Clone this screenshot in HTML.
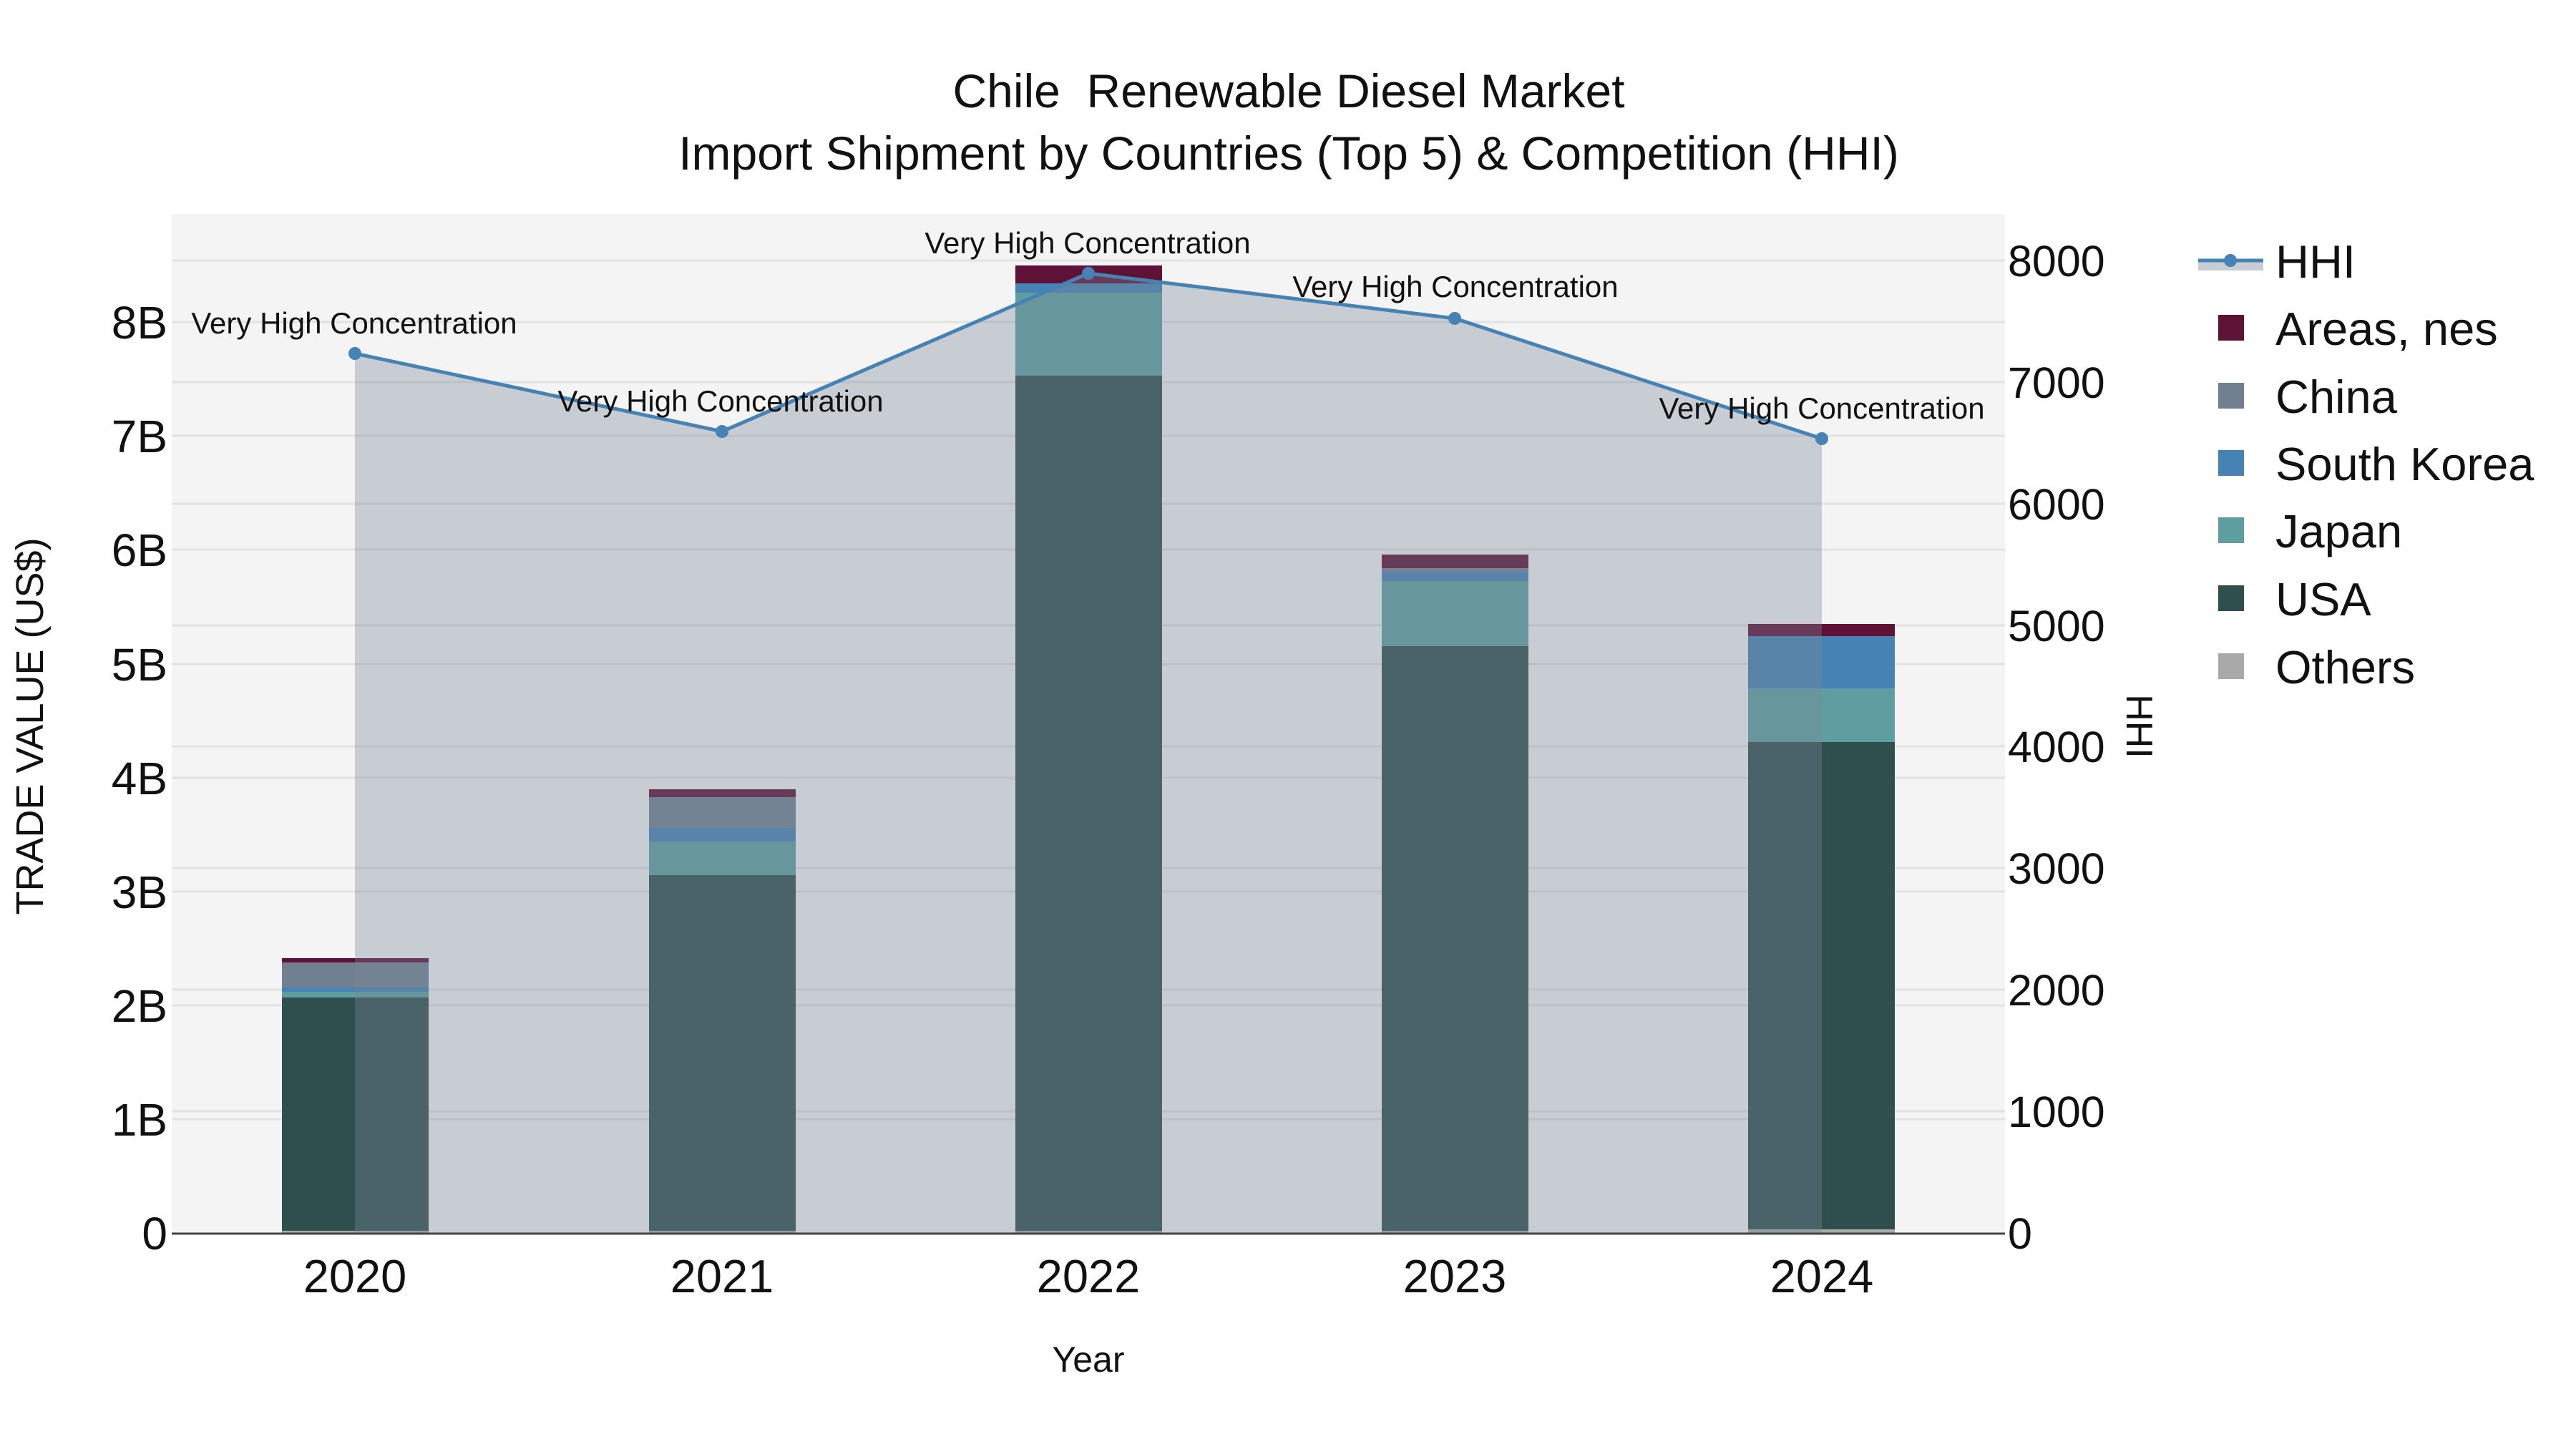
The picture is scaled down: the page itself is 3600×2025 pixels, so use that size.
<!DOCTYPE html>
<html><head><meta charset="utf-8"><style>html,body{margin:0;padding:0;background:#fff}svg{display:block}text{font-family:"Liberation Sans",sans-serif;fill:#111}</style></head>
<body>
<svg width="3600" height="2025" viewBox="0 0 3600 2025" xmlns="http://www.w3.org/2000/svg">
<rect width="3600" height="2025" fill="#fff"/>
<rect x="240" y="299" width="2562" height="1424" fill="#f4f4f4"/>
<g stroke="#e2e2e2" stroke-width="3">
<line x1="240" x2="2802" y1="1564" y2="1564"/><line x1="240" x2="2802" y1="1405" y2="1405"/><line x1="240" x2="2802" y1="1246" y2="1246"/><line x1="240" x2="2802" y1="1087" y2="1087"/><line x1="240" x2="2802" y1="928" y2="928"/><line x1="240" x2="2802" y1="768" y2="768"/><line x1="240" x2="2802" y1="609" y2="609"/><line x1="240" x2="2802" y1="450" y2="450"/>
<line x1="240" x2="2802" y1="1553" y2="1553"/><line x1="240" x2="2802" y1="1383" y2="1383"/><line x1="240" x2="2802" y1="1213" y2="1213"/><line x1="240" x2="2802" y1="1043" y2="1043"/><line x1="240" x2="2802" y1="874" y2="874"/><line x1="240" x2="2802" y1="704" y2="704"/><line x1="240" x2="2802" y1="534" y2="534"/><line x1="240" x2="2802" y1="364" y2="364"/>
</g>
<g>
<rect x="394" y="1339" width="205" height="6" fill="#5e1235"/>
<rect x="394" y="1345" width="205" height="35" fill="#708090"/>
<rect x="394" y="1380" width="205" height="6" fill="#4682b4"/>
<rect x="394" y="1386" width="205" height="8" fill="#5f9ea0"/>
<rect x="394" y="1394" width="205" height="326" fill="#2f4f4f"/>
<rect x="394" y="1720" width="205" height="3" fill="#a9a9a9"/>
<rect x="907" y="1103" width="205" height="11" fill="#5e1235"/>
<rect x="907" y="1114" width="205" height="43" fill="#708090"/>
<rect x="907" y="1157" width="205" height="19" fill="#4682b4"/>
<rect x="907" y="1176" width="205" height="47" fill="#5f9ea0"/>
<rect x="907" y="1223" width="205" height="497" fill="#2f4f4f"/>
<rect x="907" y="1720" width="205" height="3" fill="#a9a9a9"/>
<rect x="1419" y="371" width="205" height="25" fill="#5e1235"/>
<rect x="1419" y="396" width="205" height="13" fill="#4682b4"/>
<rect x="1419" y="409" width="205" height="116" fill="#5f9ea0"/>
<rect x="1419" y="525" width="205" height="1195" fill="#2f4f4f"/>
<rect x="1419" y="1720" width="205" height="3" fill="#a9a9a9"/>
<rect x="1931" y="775" width="205" height="19" fill="#5e1235"/>
<rect x="1931" y="794" width="205" height="6" fill="#708090"/>
<rect x="1931" y="800" width="205" height="12" fill="#4682b4"/>
<rect x="1931" y="812" width="205" height="91" fill="#5f9ea0"/>
<rect x="1931" y="903" width="205" height="817" fill="#2f4f4f"/>
<rect x="1931" y="1720" width="205" height="3" fill="#a9a9a9"/>
<rect x="2443" y="872" width="205" height="17" fill="#5e1235"/>
<rect x="2443" y="889" width="205" height="73" fill="#4682b4"/>
<rect x="2443" y="962" width="205" height="75" fill="#5f9ea0"/>
<rect x="2443" y="1037" width="205" height="683" fill="#2f4f4f"/>
<rect x="2443" y="1718" width="205" height="5" fill="#a9a9a9"/>
</g>
<polygon points="496,494 1009,603 1521,382 2033,445 2546,613 2546,1723 496,1723" fill="rgb(122,136,152)" fill-opacity="0.36"/>
<polyline points="496,494 1009,603 1521,382 2033,445 2546,613" fill="none" stroke="#4682b4" stroke-width="5"/>
<g fill="#4682b4"><circle cx="496" cy="494" r="9"/><circle cx="1009" cy="603" r="9"/><circle cx="1521" cy="382" r="9"/><circle cx="2033" cy="445" r="9"/><circle cx="2546" cy="613" r="9"/></g>
<line x1="240" x2="2802" y1="1724" y2="1724" stroke="#444" stroke-width="3"/>
<g font-size="42" text-anchor="middle">
<text x="495" y="466">Very High Concentration</text>
<text x="1007" y="575">Very High Concentration</text>
<text x="1520" y="354">Very High Concentration</text>
<text x="2034" y="415">Very High Concentration</text>
<text x="2546" y="585">Very High Concentration</text>
</g>
<g font-size="64" text-anchor="end">
<text x="234" y="1746">0</text><text x="234" y="1587">1B</text><text x="234" y="1428">2B</text><text x="234" y="1269">3B</text><text x="234" y="1110">4B</text><text x="234" y="951">5B</text><text x="234" y="791">6B</text><text x="234" y="632">7B</text><text x="234" y="473">8B</text>
</g>
<g font-size="61">
<text x="2806" y="1745">0</text><text x="2806" y="1575">1000</text><text x="2806" y="1405">2000</text><text x="2806" y="1235">3000</text><text x="2806" y="1065">4000</text><text x="2806" y="896">5000</text><text x="2806" y="726">6000</text><text x="2806" y="556">7000</text><text x="2806" y="386">8000</text>
</g>
<g font-size="65" text-anchor="middle">
<text x="496" y="1806">2020</text><text x="1009" y="1806">2021</text><text x="1521" y="1806">2022</text><text x="2033" y="1806">2023</text><text x="2546" y="1806">2024</text>
</g>
<text x="1521" y="1917" font-size="50" text-anchor="middle">Year</text>
<text transform="translate(60,1015) rotate(-90)" font-size="54" text-anchor="middle">TRADE VALUE (US$)</text>
<text transform="translate(2972,1015) rotate(90)" font-size="52" text-anchor="middle">HHI</text>
<text x="1801" y="150" font-size="66" text-anchor="middle" xml:space="preserve" style="white-space:pre">Chile  Renewable Diesel Market</text>
<text x="1801" y="237" font-size="66" text-anchor="middle">Import Shipment by Countries (Top 5) &amp; Competition (HHI)</text>
<rect x="3072" y="364" width="91" height="14" fill="#c8cdd4"/>
<line x1="3072" x2="3163" y1="364" y2="364" stroke="#4682b4" stroke-width="5"/>
<circle cx="3117" cy="364" r="9" fill="#4682b4"/>
<g font-size="65">
<text x="3180" y="388">HHI</text>
<text x="3180" y="482">Areas, nes</text>
<text x="3180" y="577">China</text>
<text x="3180" y="671">South Korea</text>
<text x="3180" y="765">Japan</text>
<text x="3180" y="860">USA</text>
<text x="3180" y="955">Others</text>
</g>
<rect x="3100" y="440" width="36" height="36" fill="#5e1235"/>
<rect x="3100" y="535" width="36" height="36" fill="#708090"/>
<rect x="3100" y="629" width="36" height="36" fill="#4682b4"/>
<rect x="3100" y="723" width="36" height="36" fill="#5f9ea0"/>
<rect x="3100" y="818" width="36" height="36" fill="#2f4f4f"/>
<rect x="3100" y="913" width="36" height="36" fill="#a9a9a9"/>
</svg>
</body></html>
